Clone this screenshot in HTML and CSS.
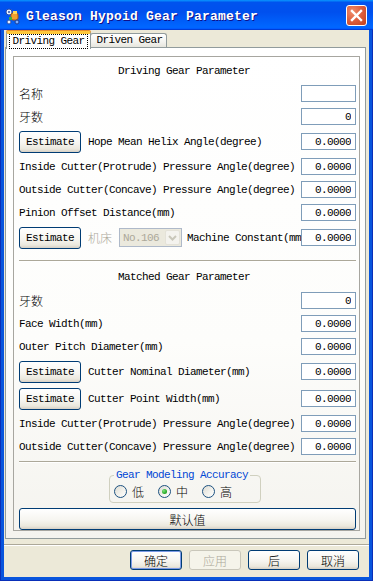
FILE: index.html
```html
<!DOCTYPE html>
<html lang="en">
<head>
  <meta charset="UTF-8">
  <meta name="viewport" content="width=device-width, initial-scale=1.0">
  <title>Gleason Hypoid Gear Parameter</title>
  <link rel="stylesheet" href="styles.css">
</head>
<body>

  <div class="window">
    <div class="titlebar">
      <svg class="app-icon" width="16" height="17" viewBox="0 0 16 17">
        <circle cx="4" cy="4" r="3" fill="#e8f0ff" stroke="#2a4ea8" stroke-width="1"/>
        <circle cx="4" cy="4" r="1" fill="#2a4ea8"/>
        <rect x="6" y="5" width="7" height="7" rx="2" fill="#f0a030" stroke="#b05a10" stroke-width="1"/>
        <rect x="8" y="3" width="4" height="3" fill="#ffd860"/>
        <rect x="4" y="9" width="3" height="3" fill="#40b040"/>
        <circle cx="4" cy="14" r="2" fill="#e8f0ff" stroke="#2a4ea8" stroke-width="1"/>
        <circle cx="12" cy="14" r="2" fill="#7fb0ff" stroke="#1a3e98" stroke-width="1"/>
      </svg>
      <span class="title">Gleason Hypoid Gear Parameter</span>
      <div class="close-btn">
        <svg width="19" height="19" viewBox="0 0 19 19">
          <path d="M5 5 L14 14 M14 5 L5 14" stroke="#fff" stroke-width="2.4" stroke-linecap="square"/>
        </svg>
      </div>
    </div>

    <div class="client">
      <div class="tabs">
        <div class="tab active"><span class="focus">Driving Gear</span></div>
        <div class="tab">Driven Gear</div>
      </div>

      <div class="panel">
        <div class="inner">
          <div class="section-title">Driving Gear Parameter</div>

          <div class="row">
            <span class="label cn">名称</span>
            <input class="field" type="text" value="">
          </div>
          <div class="row">
            <span class="label cn">牙数</span>
            <input class="field" type="text" value="0">
          </div>
          <div class="row tall">
            <button class="xp-btn est">Estimate</button>
            <span class="label">Hope Mean Helix Angle(degree)</span>
            <input class="field" type="text" value="0.0000">
          </div>
          <div class="row">
            <span class="label">Inside Cutter(Protrude) Pressure Angle(degree)</span>
            <input class="field" type="text" value="0.0000">
          </div>
          <div class="row">
            <span class="label">Outside Cutter(Concave) Pressure Angle(degree)</span>
            <input class="field" type="text" value="0.0000">
          </div>
          <div class="row">
            <span class="label">Pinion Offset Distance(mm)</span>
            <input class="field" type="text" value="0.0000">
          </div>
          <div class="row tall">
            <button class="xp-btn est">Estimate</button>
            <span class="cn muted">机床</span>
            <div class="combo">
              <span class="combo-text">No.106</span>
              <span class="combo-arrow">
                <svg width="9" height="6" viewBox="0 0 9 6"><path d="M1 1 L4.5 4.5 L8 1" fill="none" stroke="#c9c7ba" stroke-width="2"/></svg>
              </span>
            </div>
            <span class="label">Machine Constant(mm</span>
            <input class="field" type="text" value="0.0000">
          </div>

          <div class="sep first"></div>

          <div class="section-title second">Matched Gear Parameter</div>

          <div class="row">
            <span class="label cn">牙数</span>
            <input class="field" type="text" value="0">
          </div>
          <div class="row">
            <span class="label">Face Width(mm)</span>
            <input class="field" type="text" value="0.0000">
          </div>
          <div class="row">
            <span class="label">Outer Pitch Diameter(mm)</span>
            <input class="field" type="text" value="0.0000">
          </div>
          <div class="row tall">
            <button class="xp-btn est">Estimate</button>
            <span class="label">Cutter Nominal Diameter(mm)</span>
            <input class="field" type="text" value="0.0000">
          </div>
          <div class="row tall">
            <button class="xp-btn est">Estimate</button>
            <span class="label">Cutter Point Width(mm)</span>
            <input class="field" type="text" value="0.0000">
          </div>
          <div class="row">
            <span class="label">Inside Cutter(Protrude) Pressure Angle(degree)</span>
            <input class="field" type="text" value="0.0000">
          </div>
          <div class="row">
            <span class="label">Outside Cutter(Concave) Pressure Angle(degree)</span>
            <input class="field" type="text" value="0.0000">
          </div>

          <div class="sep second"></div>

          <fieldset class="accuracy">
            <legend>Gear Modeling Accuracy</legend>
            <div class="radios">
              <span class="radio"><span class="dot"></span><span class="cn">低</span></span>
              <span class="radio"><span class="dot checked"></span><span class="cn">中</span></span>
              <span class="radio"><span class="dot"></span><span class="cn">高</span></span>
            </div>
          </fieldset>

          <button class="xp-btn wide cn">默认值</button>
        </div>
      </div>

      <div class="bottom-sep"></div>

      <div class="dialog-buttons">
        <button class="xp-btn dlg default cn">确定</button>
        <button class="xp-btn dlg disabled cn">应用</button>
        <button class="xp-btn dlg cn">后</button>
        <button class="xp-btn dlg cn">取消</button>
      </div>
    </div>
  </div>

</body>
</html>
```

FILE: styles.css
```css
body {
  margin: 0;
  padding: 0;
  background-color: #fff;
}

.window {
  width: 373px;
  height: 581px;
  background-color: #0855dd;
  box-shadow: inset 1px 0 #0a2fb8, inset -1px 0 #0a2fb8, inset 0 -1px #0a2fb8;
  font-family: "Liberation Mono", "Noto Sans CJK SC", monospace;
  font-size: 11px;
  letter-spacing: -0.6px;
  color: #000;
  overflow: hidden;
}

/* title bar */
.titlebar {
  height: 30px;
  display: flex;
  align-items: center;
  background: linear-gradient(to bottom, #0997ff 0%, #0053ee 8%, #0050ee 40%, #0066ff 88%, #0066ff 93%, #005bff 95%, #003dd7 96%, #003dd7 100%);
}

.app-icon {
  margin-left: 5px;
  margin-top: 2px;
}

.title {
  margin-left: 5px;
  margin-top: 2px;
  font-family: "Liberation Mono", monospace;
  font-weight: bold;
  font-size: 13px;
  letter-spacing: 0.2px;
  color: #fff;
  text-shadow: 1px 1px #0f1089;
  flex: 1;
}

.close-btn {
  width: 19px;
  height: 19px;
  margin-right: 6px;
  margin-top: 1px;
  border: 1px solid #fff;
  border-radius: 3px;
  background: radial-gradient(circle at 30% 30%, #f08e6c 0%, #df6140 45%, #c1401d 100%);
  display: flex;
}

/* client area */
.client {
  margin: 0 4px;
  height: 547px;
  background-color: #ece9d8;
}

.tabs {
  display: flex;
  padding-top: 1px;
  padding-left: 2px;
  height: 17px;
  position: relative;
  z-index: 1;
}

.tab {
  box-sizing: border-box;
  height: 14px;
  margin-top: 2px;
  width: 77px;
  margin-left: -1px;
  border: 1px solid #919b9c;
  border-bottom: none;
  border-radius: 3px 3px 0 0;
  background: linear-gradient(to bottom, #fff 0%, #f3f3ef 60%, #e6e5dd 100%);
  text-align: center;
  line-height: 13px;
  padding-left: 2px;
}

.tab.active {
  width: 85px;
  height: 18px;
  margin-top: 0;
  margin-left: 0;
  position: relative;
  z-index: 2;
  border-top: 3px solid #ffc73c;
  box-shadow: 0 -1px #e68b2c;
  background: #fff;
  border-radius: 2px 2px 0 0;
  padding-left: 0;
  line-height: 14px;
}

.focus {
  display: inline-block;
  width: 79px;
  box-sizing: border-box;
  border: 1px dotted #000;
  line-height: 12px;
  padding-bottom: 1px;
}

.panel {
  margin-top: -1px;
  margin-left: 1px;
  width: 361px;
  box-sizing: border-box;
  border: 1px solid #919b9c;
  background: linear-gradient(to bottom, #fff 0%, #fdfdfb 60%, #f4f3ee 100%);
  padding: 8px 5px 7px 7px;
}

.inner {
  border: 1px solid #a7a6a0;
  padding: 3px 3px 0 5px;
}

.section-title {
  height: 22px;
  line-height: 22px;
  text-align: center;
  padding-right: 7px;
}

.section-title.second {
  height: 23px;
  line-height: 23px;
  margin-top: 4px;
}

.row {
  display: flex;
  align-items: center;
  height: 23px;
}

.row.tall {
  height: 27px;
}

.label {
  flex: 1;
  white-space: nowrap;
  overflow: hidden;
}

.cn {
  font-family: "Noto Sans CJK SC", sans-serif;
  font-size: 12px;
  font-weight: 300;
  letter-spacing: 0;
}

.muted {
  color: #aca899;
  margin-right: 7px;
}

.field {
  box-sizing: border-box;
  width: 55px;
  height: 17px;
  margin: 0;
  border: 1px solid #7f9db9;
  background: #fff;
  padding: 0 4px 0 0;
  text-align: right;
  font-family: "Liberation Mono", monospace;
  font-size: 11px;
  letter-spacing: -0.6px;
  color: #000;
  outline: none;
}

/* xp style push buttons */
.xp-btn {
  box-sizing: border-box;
  margin: 0;
  padding: 0;
  border: 1px solid #003c74;
  border-radius: 3px;
  background: linear-gradient(to bottom, #ffffff 0%, #f6f5f0 55%, #ebe8dd 85%, #d6d0c5 100%);
  color: #000;
  cursor: pointer;
}

.est {
  width: 62px;
  height: 22px;
  margin-right: 7px;
  font-family: "Liberation Mono", monospace;
  font-size: 11px;
  letter-spacing: -0.6px;
}

.combo {
  box-sizing: border-box;
  width: 63px;
  height: 19px;
  margin-right: 5px;
  border: 1px solid #aeb9c9;
  background: #ebe9dd;
  display: flex;
  align-items: center;
}

.combo-text {
  flex: 1;
  color: #aca899;
  padding-left: 3px;
}

.combo-arrow {
  width: 15px;
  height: 15px;
  margin-right: 1px;
  border: 1px solid #e4e2d8;
  border-radius: 2px;
  background: #f4f3ee;
  box-sizing: border-box;
  display: flex;
  align-items: center;
  justify-content: center;
}

.sep {
  border-top: 1px solid #aca899;
  border-bottom: 1px solid #fff;
}

.sep.first {
  margin-top: 9px;
}

.sep.second {
  margin-top: 3px;
}

/* accuracy group */
.accuracy {
  margin: 6px 0 0 90px;
  width: 152px;
  box-sizing: border-box;
  border: 1px solid #d0d0bf;
  border-radius: 4px;
  padding: 3px 4px 4px 4px;
}

.accuracy legend {
  padding: 0 2px;
  color: #0046d5;
  line-height: 12px;
}

.radios {
  display: flex;
  align-items: center;
  height: 14px;
  gap: 14px;
}

.radio {
  display: flex;
  align-items: center;
  gap: 5px;
}

.dot {
  box-sizing: border-box;
  width: 13px;
  height: 13px;
  border: 1px solid #1c5180;
  border-radius: 50%;
  background: linear-gradient(135deg, #dcdbd3 0%, #f4f3ee 60%, #ffffff 100%);
  display: flex;
  align-items: center;
  justify-content: center;
}

.dot.checked::after {
  content: "";
  width: 5px;
  height: 5px;
  border-radius: 50%;
  background: radial-gradient(circle at 35% 35%, #7de07d 0%, #2aac2a 60%, #178a17 100%);
}

.wide {
  display: block;
  width: 100%;
  height: 22px;
  margin-top: 5px;
}

/* bottom buttons */
.bottom-sep {
  margin-top: 5px;
  border-top: 1px solid #aca899;
  border-bottom: 1px solid #fff;
}

.dialog-buttons {
  display: flex;
  justify-content: flex-end;
  gap: 7px;
  padding-right: 10px;
  margin-top: 4px;
}

.dlg {
  width: 52px;
  height: 20px;
}

.dlg.default {
  box-shadow: inset 0 0 0 1px #7b9ae6;
}

.dlg.disabled {
  border-color: #c9c7ba;
  background: #f5f4ea;
  color: #aca899;
}
```
